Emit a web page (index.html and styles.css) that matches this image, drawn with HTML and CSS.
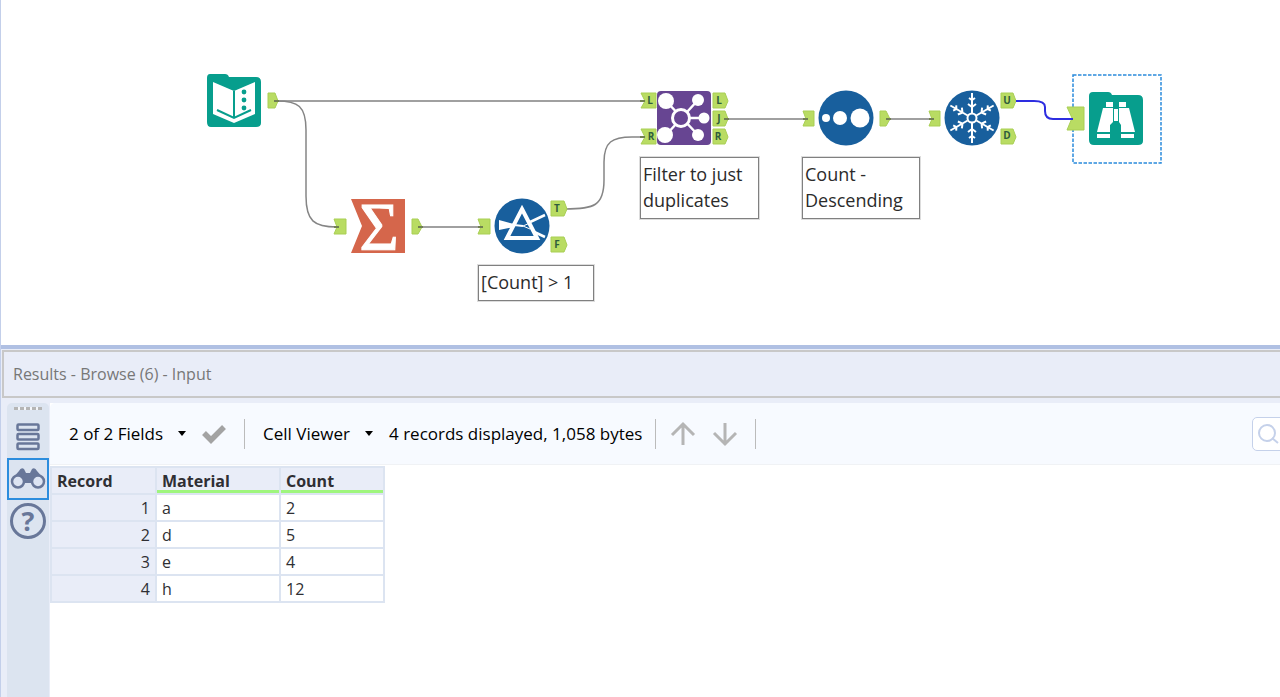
FILE: index.html
```html
<!DOCTYPE html>
<html lang="en">
<head>
<meta charset="utf-8">
<title>Workflow - Results</title>
<link rel="stylesheet" href="styles.css">
</head>
<body>
<div class="app">
  <main class="canvas">
    <svg class="wires" width="1280" height="340" aria-hidden="true">
      <g class="wire">
        <path d="M277 101H646"/>
        <path class="wire-thin" d="M277 101C298 101 306 106 306 130V196C306 221 314 227 337 227"/>
        <path d="M421 227H483"/>
        <path class="wire-thin" d="M565 209C594 209 604 206 604 180V162C604 142 612 137 632 137H646"/>
        <path d="M727 119H808"/>
        <path d="M889 119H933"/>
      </g>
      <g class="anchor">
        <path d="M268 93h7l3 8-3 7h-7z"/>
        <path d="M334 219h12v15h-12l3-7z"/>
        <path d="M412 219h6l4 8-4 7h-6z"/>
        <path d="M478 219h12v15h-12l3-7z"/>
        <path d="M551 201h13l3 8-3 7h-13z"/>
        <path d="M551 237h13l3 8-3 7h-13z"/>
        <path d="M641 93h15v15h-15l4-7z"/>
        <path d="M641 129h15v15h-15l4-7z"/>
        <path d="M713 93h12l3 8-3 7h-12z"/>
        <path d="M713 111h12l3 8-3 7h-12z"/>
        <path d="M713 129h12l3 8-3 7h-12z"/>
        <path d="M803 111h11v15h-11l3-7z"/>
        <path d="M880 111h6l4 8-4 7h-6z"/>
        <path d="M929 111h11v15h-11l3-7z"/>
        <path d="M1001 93h12l3 8-3 7h-12z"/>
        <path d="M1001 129h12l3 8-3 7h-12z"/>
      </g>
      <g class="wire wire-tips">
        <path d="M274 101h5M334 227h5M418 227h5M478 227h5M640 101h5M640 137h5M724 119h5M803 119h5M886 119h5M929 119h5"/>
      </g>
      <g class="anchor-text">
        <text x="557" y="212">T</text><text x="557" y="248">F</text>
        <text x="650" y="104">L</text><text x="651" y="140">R</text>
        <text x="719" y="104">L</text><text x="719" y="122">J</text><text x="718" y="140">R</text>
        <text x="1007" y="104">U</text><text x="1007" y="139">D</text>
      </g>
    </svg>

    <svg class="wires" width="1280" height="340" aria-hidden="true">
      <rect class="selection" x="1073" y="75" width="88" height="88"/>
      <path class="anchor" d="M1067 107h17v23h-17l5-12z"/>
      <path class="wire-active" d="M1016 101H1034Q1045 101 1045 107V111Q1045 119 1053 119H1073"/>
    </svg>

    <svg class="node node-input" width="56" height="56" viewBox="0 0 56 56" role="img" aria-label="Input">
      <path fill="#079e8d" d="M4 1H19Q22 1 23 4H50Q55 4 55 9V50Q55 54 50 54H5Q1 54 1 49V5Q1 1 4 1Z"/>
      <path fill="#fff" d="M7 9L28 18L49 9V41L28 50L7 41Z"/>
      <path fill="none" stroke="#079e8d" stroke-width="2" d="M11 37L28 45L45 37M28 18V45"/>
      <g fill="#079e8d"><circle cx="38" cy="19" r="2.4"/><circle cx="38" cy="27" r="2.4"/><circle cx="38" cy="35" r="2.4"/></g>
    </svg>

    <svg class="node node-sum" width="56" height="56" viewBox="0 0 56 56" role="img" aria-label="Summarize">
      <path fill="#d5664b" d="M1 1H55V55H1L12 28Z"/>
      <text class="sigma" x="29" y="51">Σ</text>
    </svg>

    <svg class="node node-filter" width="56" height="56" viewBox="0 0 56 56" role="img" aria-label="Filter">
      <circle cx="28" cy="28" r="27.5" fill="#185f9d"/>
      <path fill="#fff" d="M5 22L20 26V29L5 32Z"/>
      <path fill="none" stroke="#fff" stroke-width="2.5" d="M15 28H27M34 25L51 17M34 31L51 39"/>
      <path fill="#185f9d" stroke="#fff" stroke-width="4" d="M28 11L43 40H13Z"/>
      <path fill="none" stroke="#fff" stroke-width="2" d="M20 27L29 28"/>
      <path fill="none" stroke="#fff" stroke-width="1" d="M29 28L36 25M29 28L36 31"/>
    </svg>

    <svg class="node node-join" width="56" height="56" viewBox="0 0 56 56" role="img" aria-label="Join">
      <rect x="1" y="1" width="54" height="54" rx="4" fill="#674592"/>
      <path fill="none" stroke="#fff" stroke-width="2.5" d="M10 11L42 45M42 10L10 45M25 28H47"/>
      <g fill="#fff"><circle cx="10" cy="11" r="8"/><circle cx="9" cy="45" r="8"/><circle cx="42" cy="10" r="6"/><circle cx="48" cy="28" r="5.5"/><circle cx="42" cy="45" r="6"/></g>
      <circle cx="25" cy="28" r="8.5" fill="#674592" stroke="#fff" stroke-width="3"/>
    </svg>

    <svg class="node node-sort" width="56" height="56" viewBox="0 0 56 56" role="img" aria-label="Sort">
      <circle cx="28" cy="28" r="27.5" fill="#185f9d"/>
      <g fill="#fff"><circle cx="8" cy="28" r="4"/><circle cx="22" cy="28" r="7"/><circle cx="42" cy="28" r="9.5"/></g>
    </svg>

    <svg class="node node-unique" width="56" height="56" viewBox="0 0 56 56" role="img" aria-label="Unique">
      <defs><path id="arm" d="M28 23V3M25 8L28 10L31 8M24 14L28 17L32 14"/></defs>
      <circle cx="28" cy="28" r="27.5" fill="#185f9d"/>
      <g fill="none" stroke="#fff" stroke-width="2">
        <circle cx="28" cy="28" r="4.5"/>
        <use href="#arm"/><use href="#arm" transform="rotate(60 28 28)"/><use href="#arm" transform="rotate(120 28 28)"/>
        <use href="#arm" transform="rotate(180 28 28)"/><use href="#arm" transform="rotate(240 28 28)"/><use href="#arm" transform="rotate(300 28 28)"/>
      </g>
    </svg>

    <svg class="node node-browse" width="56" height="56" viewBox="0 0 56 56" role="img" aria-label="Browse">
      <path fill="#079e8d" d="M5 1H20Q23 1 24 4H50Q55 4 55 9V50Q55 54 50 54H6Q1 54 1 49V5Q1 1 5 1Z"/>
      <g fill="#fff">
        <rect x="18" y="11" width="7" height="5"/><rect x="31" y="11" width="7" height="5"/>
        <path d="M15 17H25V31L22 34V41H9ZM31 17H41L47 41H33V34L31 31ZM26 18H30V30H26ZM9 43H22V47H9ZM33 43H46V47H33Z"/>
      </g>
    </svg>

    <div class="note note-filter">[Count] &gt; 1</div>
    <div class="note note-join">Filter to just<br>duplicates</div>
    <div class="note note-sort">Count -<br>Descending</div>
  </main>

  <section class="results">
    <h1 class="results-title">Results - Browse (6) - Input</h1>
    <div class="results-body">
      <nav class="rail" aria-label="Result views">
        <span class="grip"></span>
        <button class="rail-btn" aria-label="Messages">
          <svg width="26" height="30" viewBox="0 0 26 30" fill="none" stroke="#687799" stroke-width="2.5"><rect x="2.5" y="2.5" width="21" height="5.5" rx="1"/><rect x="2.5" y="12" width="21" height="5.5" rx="1"/><rect x="2.5" y="21.5" width="21" height="5.5" rx="1"/></svg>
        </button>
        <button class="rail-btn rail-active" aria-label="Browse">
          <svg width="36" height="24" viewBox="0 0 36 24"><path fill="#687799" d="M2 12L9 4Q11 0 14 2L16 6H20L22 2Q25 0 27 4L34 12L28 19L21 16H15L8 19Z"/><g fill="#dce4f2" stroke="#687799" stroke-width="2.5"><circle cx="8" cy="14.5" r="6"/><circle cx="28" cy="14.5" r="6"/></g></svg>
        </button>
        <button class="rail-btn" aria-label="Help">
          <svg width="38" height="38" viewBox="0 0 38 38"><circle cx="19" cy="19" r="16.5" fill="none" stroke="#687799" stroke-width="3"/><text class="help" x="19" y="29">?</text></svg>
        </button>
      </nav>
      <div class="data">
        <div class="toolbar">
          <button class="menu fields">2 of 2 Fields<span class="caret"></span></button>
          <button class="icon-btn check" aria-label="Apply"><svg width="26" height="22" viewBox="0 0 26 22"><path fill="none" stroke="#a3a3a3" stroke-width="5.5" d="M3 10L10 17L23 4"/></svg></button>
          <span class="sep"></span>
          <button class="menu viewer">Cell Viewer<span class="caret"></span></button>
          <span class="status">4 records displayed, 1,058 bytes</span>
          <span class="sep"></span>
          <button class="icon-btn up" aria-label="Previous"><svg width="24" height="24" viewBox="0 0 24 24" fill="none" stroke="#b5b5b5" stroke-width="3"><path d="M12 23V3M1 13L12 2L23 13"/></svg></button>
          <button class="icon-btn down" aria-label="Next"><svg width="24" height="24" viewBox="0 0 24 24" fill="none" stroke="#b5b5b5" stroke-width="3"><path d="M12 1V21M1 11L12 22L23 11"/></svg></button>
          <span class="sep"></span>
          <button class="search" aria-label="Search"><svg width="22" height="22" viewBox="0 0 22 22" fill="none" stroke="#c5d1ea" stroke-width="2"><circle cx="10" cy="10" r="8"/><path d="M15 15L21 20"/></svg></button>
        </div>
        <table class="grid">
          <thead><tr><th class="rec" scope="col">Record</th><th class="mat" scope="col">Material</th><th class="cnt" scope="col">Count</th></tr></thead>
          <tbody>
            <tr><td class="rec">1</td><td>a</td><td>2</td></tr>
            <tr><td class="rec">2</td><td>d</td><td>5</td></tr>
            <tr><td class="rec">3</td><td>e</td><td>4</td></tr>
            <tr><td class="rec">4</td><td>h</td><td>12</td></tr>
          </tbody>
        </table>
      </div>
    </div>
  </section>
</div>
</body>
</html>
```
FILE: styles.css
```css
* { box-sizing: border-box; }
body { margin: 0; font-family: "Open Sans", "Noto Sans", sans-serif; color: #000; background: #fff; }
button { font: inherit; color: inherit; background: none; border: 0; padding: 0; }
svg { display: block; flex: none; overflow: visible; }

.app { display: flex; flex-direction: column; min-height: 100vh; border-left: 1px solid #c3cfea; }
.canvas { position: relative; height: 345px; overflow: hidden; margin-left: -1px; border-left: 1px solid #c3cfea; }
.wires { position: absolute; top: 0; left: -1px; }
.wire { fill: none; stroke: #a0a0a0; stroke-width: 2; }
.wire-thin { stroke: #858585; stroke-width: 1.5; }
.wire-tips { stroke: #718052; }
.wire-active { fill: none; stroke: #2d2de0; stroke-width: 2; }
.anchor { fill: #b9dc63; stroke: #a9cf55; stroke-width: 1; }
.anchor-text { font: bold 10px "Open Sans", sans-serif; fill: #2f5d3c; text-anchor: middle; }

.node { position: absolute; }
.node-input { left: 205px; top: 73px; }
.node-sum { left: 349px; top: 198px; }
.node-filter { left: 493px; top: 198px; }
.node-join { left: 655px; top: 90px; }
.node-sort { left: 817px; top: 90px; }
.node-unique { left: 943px; top: 90px; }
.node-browse { left: 1087px; top: 91px; }
.sigma { font: 68px/1 "Liberation Serif", serif; fill: #fff; stroke: #fff; stroke-width: 1; text-anchor: middle; }
.selection { fill: none; stroke: #2a8bdc; stroke-width: 1.5; stroke-dasharray: 3.5 1.5; }

.note { position: absolute; padding: 3px 2px 5px; border: 1px solid #808080; outline: 1px solid #ddd; background: #fff; font-size: 18px; line-height: 26px; color: #2b2b2b; white-space: nowrap; }
.note-filter { left: 477px; top: 265px; width: 116px; }
.note-join { left: 639px; top: 157px; width: 119px; }
.note-sort { left: 801px; top: 157px; width: 118px; }

.results { flex: 1; display: flex; flex-direction: column; border-top: 4px solid #b0c0e3; background: #e9edf8; }
.results-title { margin: 1px 0 5px 1px; padding: 0 9px; border: 2px solid #c8c8c8; border-right: 0; font-size: 16px; font-weight: 400; line-height: 44px; color: #777; }
.results-body { flex: 1; display: flex; gap: 1px; padding-left: 6px; }

.rail { flex: none; width: 42px; display: flex; flex-direction: column; align-items: center; background: #dce4f0; border-radius: 5px 5px 0 0; }
.grip { width: 28px; height: 3px; margin: 4px 0 6px; background: repeating-linear-gradient(90deg, #b5b5b5 0 4px, #f4f6fa 4px 6px); }
.rail-btn { width: 42px; height: 42px; display: flex; align-items: center; justify-content: center; }
.rail-active { border: 2px solid #2c8ddd; }

.data { flex: 1; min-width: 0; background: #fff; }
.toolbar { display: flex; align-items: center; height: 62px; padding-left: 19px; background: #f7faff; border-bottom: 1px solid #f0f2f5; border-radius: 5px 0 0 0; overflow: hidden; font-size: 17px; line-height: 24px; white-space: nowrap; }
.menu { display: flex; align-items: center; justify-content: space-between; }
.fields { width: 117px; }
.viewer { width: 110px; margin-left: 18px; }
.caret { border: 4px solid transparent; border-top: 5px solid #000; border-bottom: 0; }
.check { margin: 0 17px 0 15px; }
.sep { width: 1px; height: 30px; background: #bbb; }
.status { width: 251px; margin: 0 15px 0 16px; }
.up { margin-left: 15px; }
.down { margin: 0 18px; }
.search { flex: none; display: flex; align-items: center; width: 40px; height: 34px; margin: 0 -12px 0 auto; padding-left: 4px; border: 1px solid #c5d1ea; border-radius: 5px; background: #fff; }

.grid { margin-top: 1px; border-collapse: collapse; table-layout: fixed; width: 335px; font-size: 16px; line-height: 20px; color: #2f2f33; }
.grid th, .grid td { height: 27px; padding: 0 5px; border: 2px solid #dce4f1; text-align: left; }
.grid th { background: #e9edf8; font-weight: 700; }
.grid .rec { width: 105px; background: #e9edf8; }
.grid td.rec { text-align: right; }
.mat { width: 124px; }
.grid .mat, .grid .cnt { box-shadow: inset 0 -3px #9ff57d; }
.help { font: bold 27px "Open Sans", sans-serif; fill: #687799; text-anchor: middle; }
```
